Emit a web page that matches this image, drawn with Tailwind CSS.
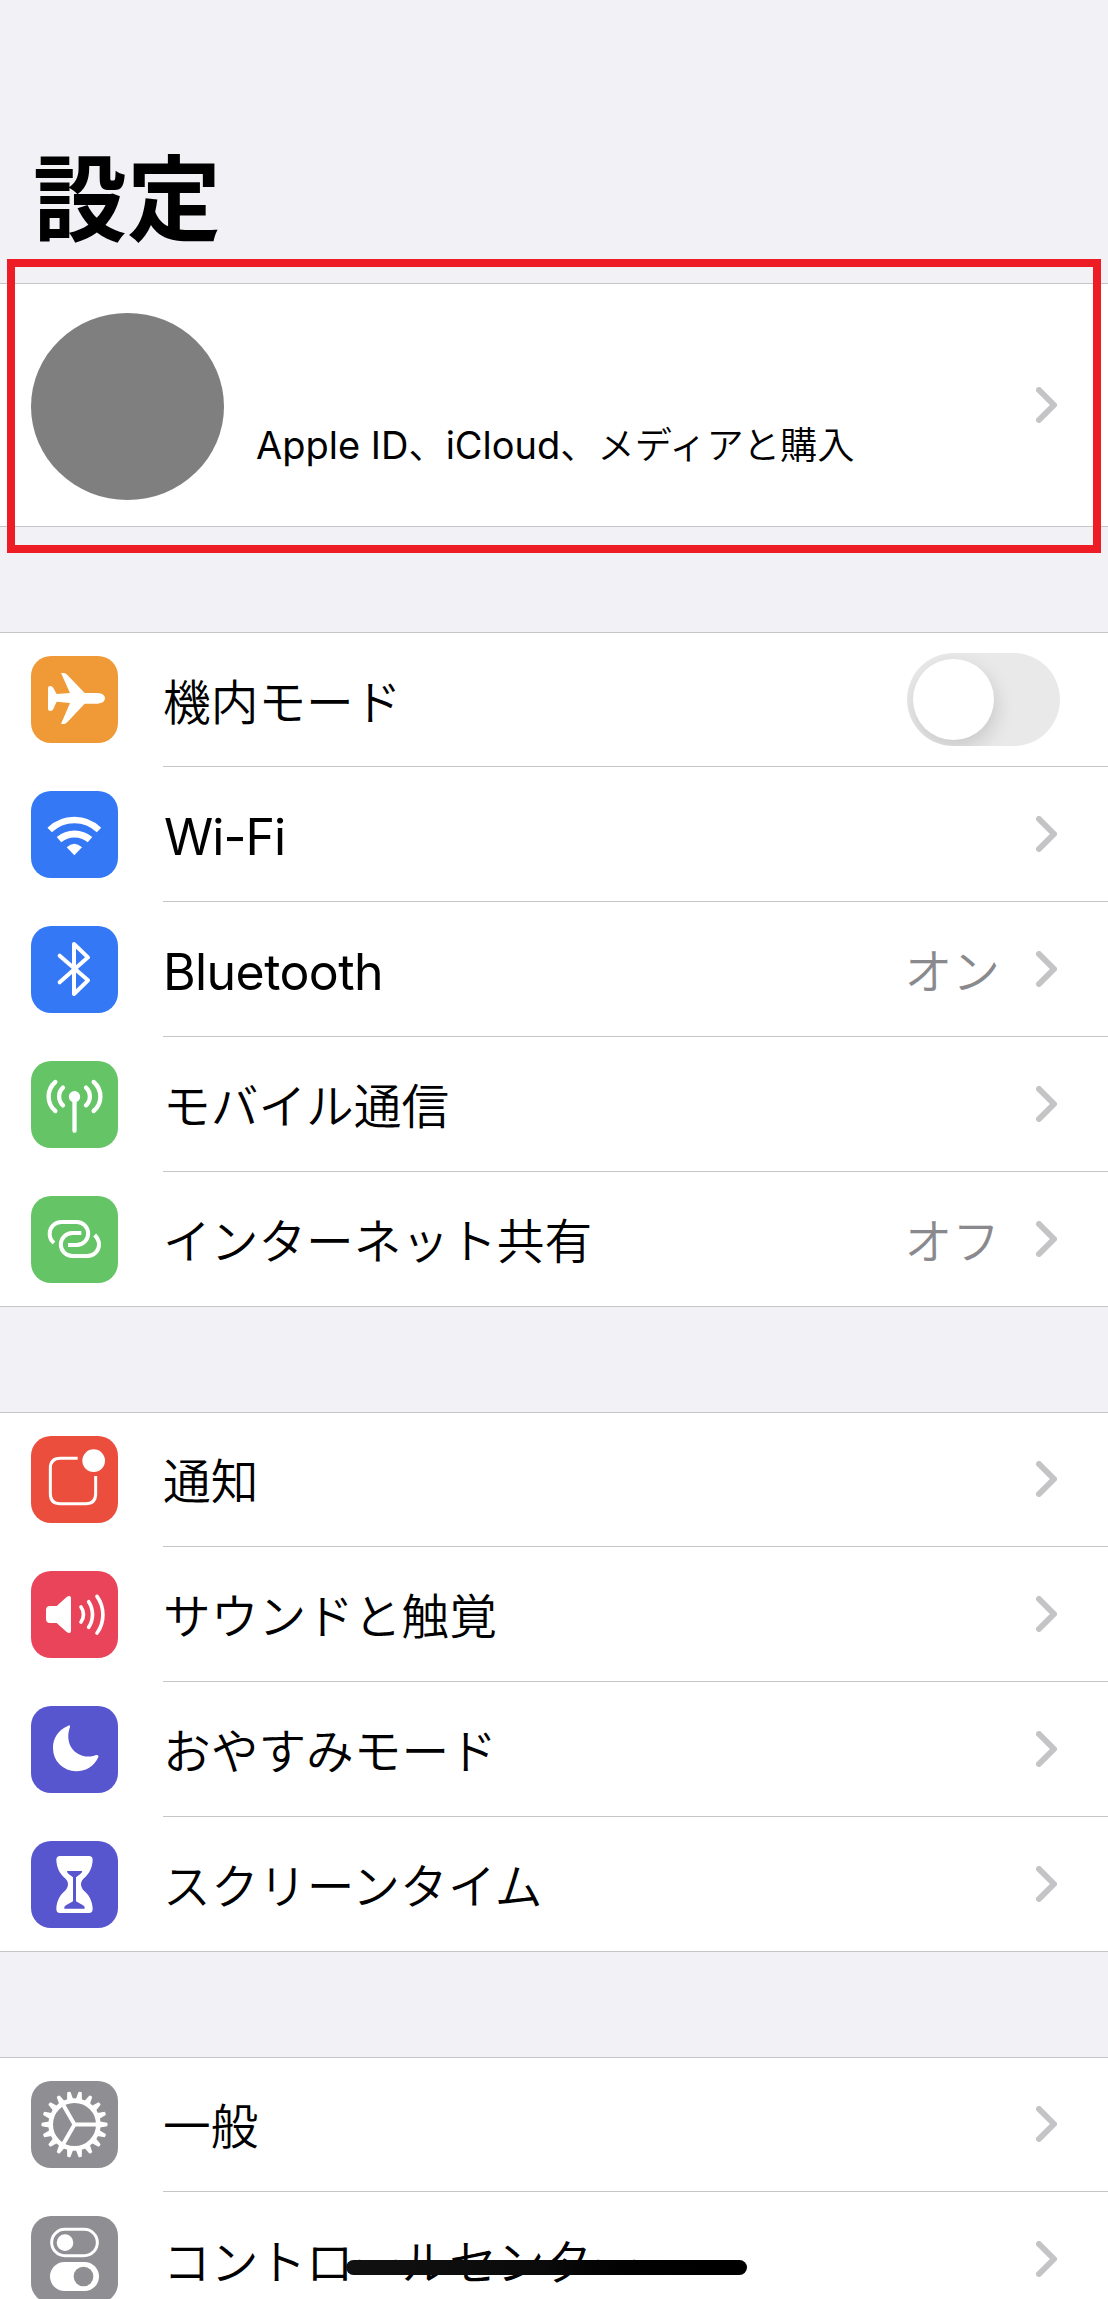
<!DOCTYPE html>
<html lang="ja">
<head>
    <meta charset="UTF-8">
    <meta name="viewport" content="width=device-width, initial-scale=1.0">
    <title>設定</title>
    <script src="https://cdn.jsdelivr.net/npm/@tailwindcss/browser@4"></script>
</head>
<body class="bg-[#f2f1f6]">

<div class="relative w-[1108px] h-[2299px] overflow-hidden bg-[#f2f1f6] text-black font-['Noto_Sans_CJK_JP',sans-serif] font-[350] text-[47.7px] leading-none">

    <!-- Title -->
    <header class="h-[283px] pt-[145px] pl-[33px]">
        <h1 class="text-[94px] leading-[96px] font-bold">設定</h1>
    </header>

    <!-- Profile -->
    <section class="flex items-center h-[244px] bg-white border-y border-[#c6c6c8] pl-[31px] pr-[51px]">
        <div class="w-[193px] h-[187px] mt-[3px] rounded-[50%] bg-[#7f7f7f]"></div>
        <p class="ml-[32px] mt-[79px] text-[37.2px] whitespace-nowrap"><span class="font-['Inter'] font-normal text-[38px]">Apple ID</span>、<span class="font-['Inter'] font-normal text-[38px]">iCloud</span>、メディアと購入</p>
        <svg class="ml-auto w-[21px] h-[36px]" viewBox="0 0 21 36" fill="none" stroke="#c4c4c6" stroke-width="6" stroke-linecap="round" stroke-linejoin="round"><path d="M3 3l15 15L3 33"/></svg>
    </section>

    <!-- Connectivity -->
    <section class="mt-[105px] bg-white border-b border-[#c6c6c8]">
        <div class="flex h-[134px] border-t border-[#c6c6c8]">
            <div class="flex items-center w-[163px] pl-[31px]">
                <svg class="w-[87px] h-[87px] rounded-[20px] bg-[#f09a37]" viewBox="0 0 261 261" fill="#fff"><path d="M51 97Q51 90 58 90Q64 90 67 96L77 114L117 111L90 51H100Q105 52 110 58L161 111H200Q222 113 222 127Q222 141 200 143H161L110 197Q105 203 100 204H90L117 141L77 137L67 159Q64 165 58 165Q51 165 51 158Z"/></svg>
            </div>
            <div class="flex flex-1 items-center justify-between pr-[48px]">
                <span>機内モード</span>
                <div class="w-[153px] h-[93px] p-[6px] rounded-full bg-[#e9e9e9] overflow-hidden">
                    <div class="size-[81px] rounded-full bg-white shadow-[2px_8px_20px_rgba(0,0,0,0.14)]"></div>
                </div>
            </div>
        </div>
        <div class="flex h-[135px]">
            <div class="flex items-center w-[163px] pl-[31px] pt-[2px]">
                <svg class="w-[87px] h-[87px] rounded-[20px] bg-[#3478f6]" viewBox="0 0 261 261" fill="none" stroke="#fff"><path stroke-width="19" d="M56 117A106 106 0 0 1 204 117"/><path stroke-width="21" d="M84 146A72 72 0 0 1 177 146"/><path fill="#fff" stroke="none" d="M107 169Q130 148 153 169L130 193Z"/></svg>
            </div>
            <div class="flex flex-1 items-center justify-between pr-[51px] border-t border-[#c6c6c8]">
                <span class="pt-[5px] pl-px font-['Inter'] font-normal text-[50px] tracking-[-1px]">Wi-Fi</span>
                <svg class="w-[21px] h-[36px]" viewBox="0 0 21 36" fill="none" stroke="#c4c4c6" stroke-width="6" stroke-linecap="round" stroke-linejoin="round"><path d="M3 3l15 15L3 33"/></svg>
            </div>
        </div>
        <div class="flex h-[135px]">
            <div class="flex items-center w-[163px] pl-[31px] pt-[2px]">
                <svg class="w-[87px] h-[87px] rounded-[20px] bg-[#3478f6]" viewBox="0 0 261 261" fill="none" stroke="#fff" stroke-width="12" stroke-linecap="round" stroke-linejoin="round"><path d="M86 89L171 163L129 204V54L171 94L86 169"/></svg>
            </div>
            <div class="flex flex-1 items-center pr-[51px] border-t border-[#c6c6c8]">
                <span class="pt-[5px] font-['Inter'] font-normal text-[50px] tracking-[-0.6px]">Bluetooth</span>
                <span class="ml-auto mr-[36px] text-[#8a8a8e]">オン</span>
                <svg class="w-[21px] h-[36px]" viewBox="0 0 21 36" fill="none" stroke="#c4c4c6" stroke-width="6" stroke-linecap="round" stroke-linejoin="round"><path d="M3 3l15 15L3 33"/></svg>
            </div>
        </div>
        <div class="flex h-[135px]">
            <div class="flex items-center w-[163px] pl-[31px] pt-[2px]">
                <svg class="w-[87px] h-[87px] rounded-[20px] bg-[#65c466]" viewBox="0 0 261 261" fill="none" stroke="#fff" stroke-width="13" stroke-linecap="round"><circle cx="130.500" cy="107" r="17" fill="#fff" stroke="none"/><path d="M130.500 110V209M96 80A36 36 0 0 0 96 133M73 63A57 57 0 0 0 73 150M165 80A36 36 0 0 1 165 133M188 63A57 57 0 0 1 188 150"/></svg>
            </div>
            <div class="flex flex-1 items-center justify-between pr-[51px] border-t border-[#c6c6c8]">
                <span>モバイル通信</span>
                <svg class="w-[21px] h-[36px]" viewBox="0 0 21 36" fill="none" stroke="#c4c4c6" stroke-width="6" stroke-linecap="round" stroke-linejoin="round"><path d="M3 3l15 15L3 33"/></svg>
            </div>
        </div>
        <div class="flex h-[135px]">
            <div class="flex items-center w-[163px] pl-[31px] pt-[2px]">
                <svg class="w-[87px] h-[87px] rounded-[20px] bg-[#65c466]" viewBox="0 0 261 261" fill="none" stroke="#fff" stroke-width="12"><path d="M69 141Q56 130 56 113A35 35 0 0 1 91 78H137A34.500 34.500 0 0 1 137 147H111M151 111H124A34.500 34.500 0 0 0 124 180H170A34.500 34.500 0 0 0 204 146Q204 130 191 117"/></svg>
            </div>
            <div class="flex flex-1 items-center pr-[51px] border-t border-[#c6c6c8]">
                <span>インターネット共有</span>
                <span class="ml-auto mr-[36px] text-[#8a8a8e]">オフ</span>
                <svg class="w-[21px] h-[36px]" viewBox="0 0 21 36" fill="none" stroke="#c4c4c6" stroke-width="6" stroke-linecap="round" stroke-linejoin="round"><path d="M3 3l15 15L3 33"/></svg>
            </div>
        </div>
    </section>

    <!-- Notifications, sound, focus -->
    <section class="mt-[105px] bg-white border-b border-[#c6c6c8]">
        <div class="flex h-[134px] border-t border-[#c6c6c8]">
            <div class="flex items-center w-[163px] pl-[31px]">
                <svg class="w-[87px] h-[87px] rounded-[20px] bg-[#eb4e3d]" viewBox="0 0 261 261" fill="none" stroke="#fff" stroke-width="9"><path d="M140 67H88Q58 67 58 97V173Q58 203 88 203H164Q194 203 194 173V120"/><circle cx="188" cy="74" r="34" fill="#fff" stroke="none"/></svg>
            </div>
            <div class="flex flex-1 items-center justify-between pr-[51px] pb-px">
                <span>通知</span>
                <svg class="w-[21px] h-[36px]" viewBox="0 0 21 36" fill="none" stroke="#c4c4c6" stroke-width="6" stroke-linecap="round" stroke-linejoin="round"><path d="M3 3l15 15L3 33"/></svg>
            </div>
        </div>
        <div class="flex h-[135px]">
            <div class="flex items-center w-[163px] pl-[31px] pt-[2px]">
                <svg class="w-[87px] h-[87px] rounded-[20px] bg-[#ea445a]" viewBox="0 0 261 261" fill="none" stroke="#fff" stroke-width="11" stroke-linecap="round"><path fill="#fff" stroke="none" d="M57 105H77L107 78Q112 74 116 75Q120 76 120 81V180Q120 185 116 186Q112 187 107 183L77 156H57Q45 156 45 144V117Q45 105 57 105Z"/><path d="M150 108A38 38 0 0 1 150 153M173 92A70 70 0 0 1 173 169M198 76A94 94 0 0 1 198 186"/></svg>
            </div>
            <div class="flex flex-1 items-center justify-between pr-[51px] border-t border-[#c6c6c8]">
                <span>サウンドと触覚</span>
                <svg class="w-[21px] h-[36px]" viewBox="0 0 21 36" fill="none" stroke="#c4c4c6" stroke-width="6" stroke-linecap="round" stroke-linejoin="round"><path d="M3 3l15 15L3 33"/></svg>
            </div>
        </div>
        <div class="flex h-[135px]">
            <div class="flex items-center w-[163px] pl-[31px] pt-[2px]">
                <svg class="w-[87px] h-[87px] rounded-[20px] bg-[#5856ce]" viewBox="0 0 261 261" fill="#fff"><path d="M110 60Q118 55 117 63C109 84 110 108 122 126C138 149 168 158 195 147Q204 146 202 153C190 180 166 196 135 196A69 69 0 0 1 66 127C65 98 82 72 110 60Z"/></svg>
            </div>
            <div class="flex flex-1 items-center justify-between pr-[51px] border-t border-[#c6c6c8]">
                <span>おやすみモード</span>
                <svg class="w-[21px] h-[36px]" viewBox="0 0 21 36" fill="none" stroke="#c4c4c6" stroke-width="6" stroke-linecap="round" stroke-linejoin="round"><path d="M3 3l15 15L3 33"/></svg>
            </div>
        </div>
        <div class="flex h-[135px]">
            <div class="flex items-center w-[163px] pl-[31px] pt-[2px]">
                <svg class="w-[87px] h-[87px] rounded-[20px] bg-[#5856ce]" viewBox="0 0 261 261"><path fill="#fff" d="M87 45H174Q185 45 185 57C184 80 175 97 163 108Q150 118 150 130Q150 143 163 153C175 163 184 182 185 203Q185 216 174 216H87Q76 216 76 203C77 182 86 163 98 153Q111 143 111 130Q111 118 98 108C86 97 77 80 76 57Q76 45 87 45Z"/><path fill="#5856ce" d="M108 90H154Q153 96 148 99L135 109V181L156 193Q163 197 161 203H100Q98 197 105 193L126 181V109L113 99Q108 96 108 90Z"/></svg>
            </div>
            <div class="flex flex-1 items-center justify-between pr-[51px] border-t border-[#c6c6c8]">
                <span class="tracking-[0.2px]">スクリーンタイム</span>
                <svg class="w-[21px] h-[36px]" viewBox="0 0 21 36" fill="none" stroke="#c4c4c6" stroke-width="6" stroke-linecap="round" stroke-linejoin="round"><path d="M3 3l15 15L3 33"/></svg>
            </div>
        </div>
    </section>

    <!-- General -->
    <section class="mt-[105px] bg-white">
        <div class="flex h-[134px] border-t border-[#c6c6c8]">
            <div class="flex items-center w-[163px] pl-[31px]">
                <svg class="w-[87px] h-[87px] rounded-[20px] bg-[#8e8e93]" viewBox="0 0 261 261">
                    <defs>
                        <path id="teeth" fill="#fff" d="M72 -10L98 -5Q101 0 98 5L72 10ZM-72 -10L-98 -5Q-101 0 -98 5L-72 10Z"/>
                    </defs>
                    <g transform="translate(130.500 130.500)">
                        <circle r="71.500" fill="none" stroke="#fff" stroke-width="14"/>
                        <path d="M70 0H0L-35 -61M0 0L-35 61" fill="none" stroke="#fff" stroke-width="12"/>
                        <use href="#teeth"/>
                        <use href="#teeth" transform="rotate(20)"/>
                        <use href="#teeth" transform="rotate(40)"/>
                        <use href="#teeth" transform="rotate(60)"/>
                        <use href="#teeth" transform="rotate(80)"/>
                        <use href="#teeth" transform="rotate(100)"/>
                        <use href="#teeth" transform="rotate(120)"/>
                        <use href="#teeth" transform="rotate(140)"/>
                        <use href="#teeth" transform="rotate(160)"/>
                    </g>
                </svg>
            </div>
            <div class="flex flex-1 items-center justify-between pr-[51px] pb-px">
                <span>一般</span>
                <svg class="w-[21px] h-[36px]" viewBox="0 0 21 36" fill="none" stroke="#c4c4c6" stroke-width="6" stroke-linecap="round" stroke-linejoin="round"><path d="M3 3l15 15L3 33"/></svg>
            </div>
        </div>
        <div class="flex h-[135px]">
            <div class="flex items-center w-[163px] pl-[31px] pt-[2px]">
                <svg class="w-[87px] h-[87px] rounded-[20px] bg-[#8e8e93]" viewBox="0 0 261 261" fill="#fff"><rect x="62" y="40" width="137" height="79" rx="39.500" fill="none" stroke="#fff" stroke-width="9"/><circle cx="102" cy="80" r="25"/><rect x="57" y="138" width="147" height="87" rx="43.500"/><circle cx="157.500" cy="181.500" r="29.500" fill="#8e8e93"/></svg>
            </div>
            <div class="flex flex-1 items-center justify-between pr-[51px] border-t border-[#c6c6c8]">
                <span class="pt-[2px]">コントロールセンター</span>
                <svg class="w-[21px] h-[36px]" viewBox="0 0 21 36" fill="none" stroke="#c4c4c6" stroke-width="6" stroke-linecap="round" stroke-linejoin="round"><path d="M3 3l15 15L3 33"/></svg>
            </div>
        </div>
    </section>

    <!-- Highlight frame -->
    <div class="absolute left-[7px] top-[259px] w-[1094px] h-[294px] border-8 border-[#ee1c24]"></div>

    <!-- Home indicator -->
    <div class="absolute left-[346px] top-[2260px] w-[401px] h-[15px] rounded-full bg-linear-to-r from-[#111] via-[#0a0a0a] to-black"></div>
</div>

</body>
</html>
